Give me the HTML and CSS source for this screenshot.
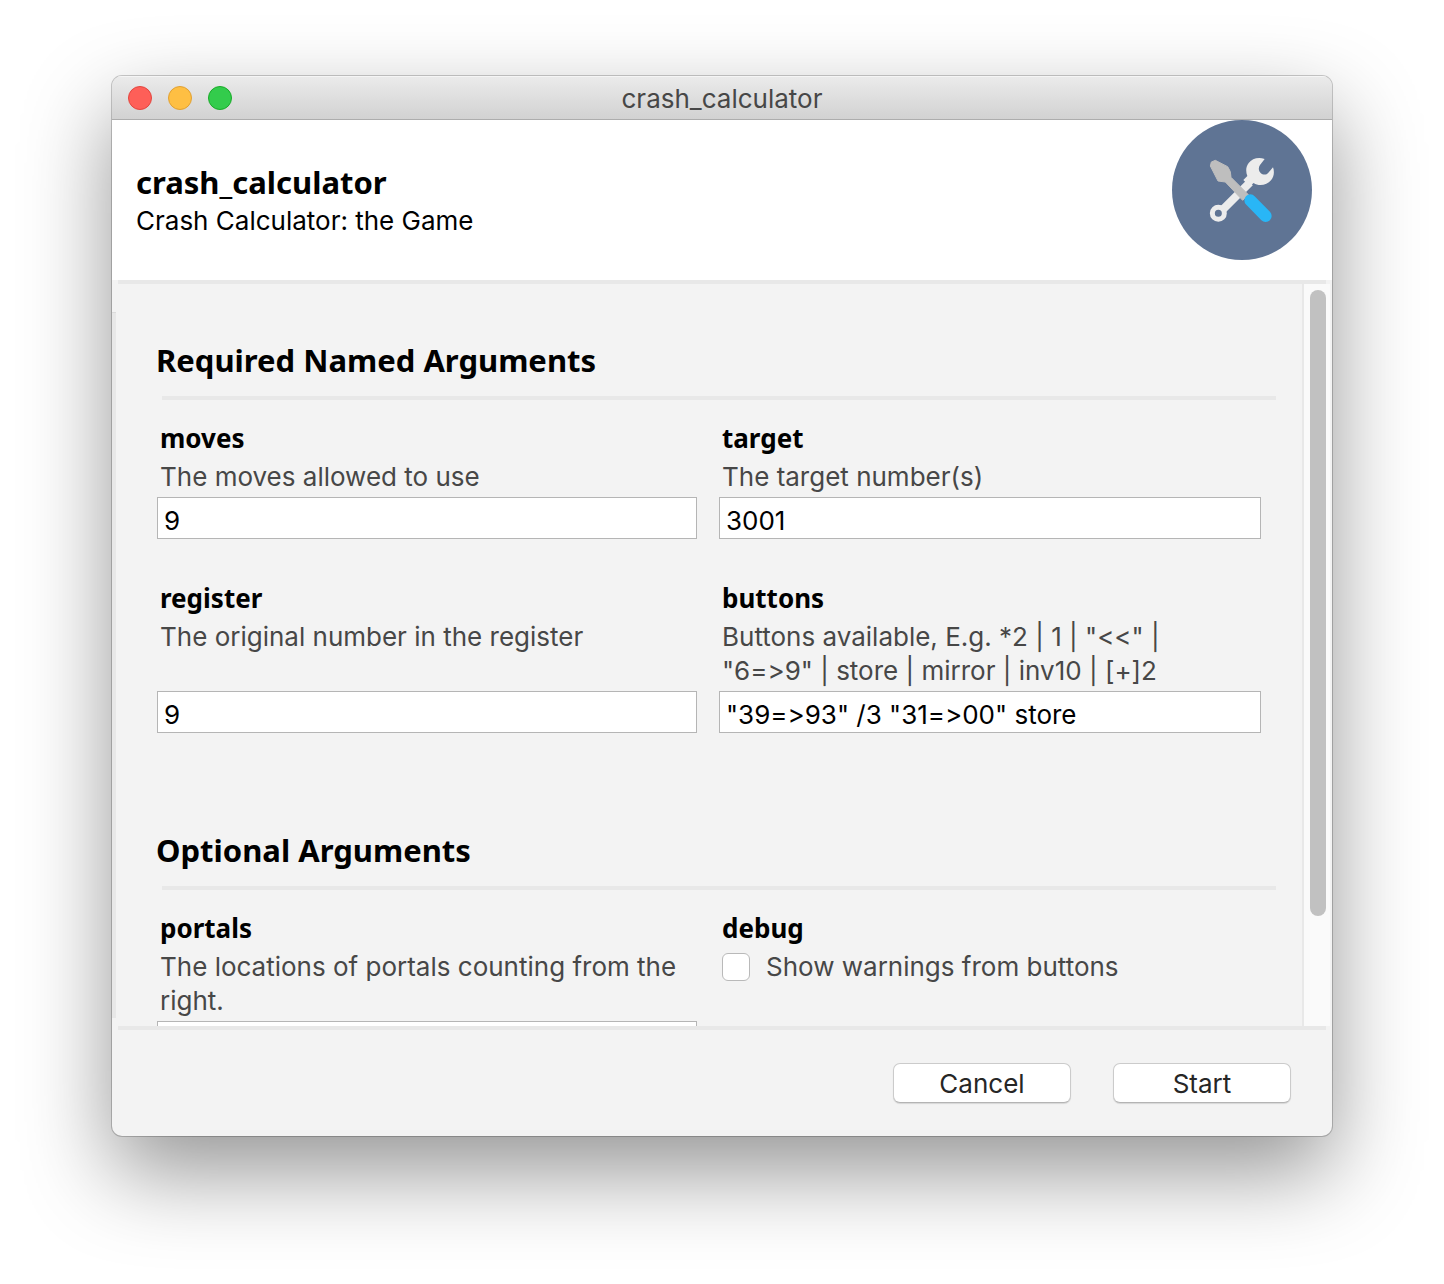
FILE: index.html
```html
<!DOCTYPE html>
<html lang="en">
<head>
<meta charset="utf-8">
<title>crash_calculator</title>
<link rel="stylesheet" href="styles.css">
</head>
<body>
<main class="window">
  <div class="titlebar">
    <div class="lights">
      <button class="light close" type="button" aria-label="Close"></button>
      <button class="light minimize" type="button" aria-label="Minimize"></button>
      <button class="light zoom" type="button" aria-label="Zoom"></button>
    </div>
    <span class="window-title">crash_calculator</span>
  </div>

  <header class="header">
    <div class="header-text">
      <h1 class="program-name">crash_calculator</h1>
      <p class="program-description">Crash Calculator: the Game</p>
    </div>
    <svg class="logo" viewBox="-84 -90 420 420" aria-hidden="true">
      <circle cx="126" cy="120" r="210" fill="#5f7494"/>
      <path d="M66 181 L150 97" stroke="#ececec" stroke-width="24" fill="none"/>
      <circle cx="55" cy="190" r="18" fill="none" stroke="#ececec" stroke-width="15"/>
      <path d="M194 27 C176 20 156 25 146 39 C137 50 137 65 142 78 L130 90 L149 109 L161 99 C176 110 201 106 213 91 C222 80 224 65 219 52 L205 68 C200 75 189 76 182 69 C175 62 175 53 180 45 Z" fill="#ececec"/>
      <path d="M31 48 L34 36 L46 31 L83 50 Q94 64 93 82 L145 134 L128 151 L76 96 L54 93 Z" fill="#bebebe" stroke="#bebebe" stroke-width="3" stroke-linejoin="round"/>
      <path d="M151 151 L197 198" stroke="#29b6f6" stroke-width="36" stroke-linecap="round"/>
    </svg>
  </header>

  <hr class="divider">

  <form class="body" id="arguments">
    <div class="gutter"></div>
    <div class="pane">
      <section class="group">
        <h2 class="group-title">Required Named Arguments</h2>
        <hr class="group-rule">
        <div class="fields">
          <div class="field">
            <label class="name" for="moves">moves</label>
            <p class="help">The moves allowed to use</p>
            <input class="text" id="moves" type="text" value="9">
          </div>
          <div class="field">
            <label class="name" for="target">target</label>
            <p class="help">The target number(s)</p>
            <input class="text" id="target" type="text" value="3001">
          </div>
          <div class="field">
            <label class="name" for="register">register</label>
            <p class="help">The original number in the register</p>
            <input class="text" id="register" type="text" value="9">
          </div>
          <div class="field">
            <label class="name" for="buttons">buttons</label>
            <p class="help">Buttons available, E.g. *2 | 1 | "&lt;&lt;" |<br>"6=&gt;9" | store | mirror | inv10 | [+]2</p>
            <input class="text" id="buttons" type="text" value="&quot;39=&gt;93&quot; /3 &quot;31=&gt;00&quot; store">
          </div>
        </div>
      </section>
      <section class="group">
        <h2 class="group-title">Optional Arguments</h2>
        <hr class="group-rule">
        <div class="fields">
          <div class="field">
            <label class="name" for="portals">portals</label>
            <p class="help">The locations of portals counting from the right.</p>
            <input class="text" id="portals" type="text">
          </div>
          <div class="field">
            <span class="name">debug</span>
            <label class="check help"><input class="box" type="checkbox">Show warnings from buttons</label>
          </div>
        </div>
      </section>
    </div>
    <div class="scrollbar"><div class="thumb"></div></div>
  </form>

  <hr class="divider">

  <footer class="footer">
    <button class="action" type="button">Cancel</button>
    <button class="action" type="submit" form="arguments">Start</button>
  </footer>
</main>
</body>
</html>
```

FILE: styles.css
```css
* {
  box-sizing: border-box;
}

body {
  margin: 0;
  height: 100vh;
  padding: 76px 112px 148px;
  background: #fff;
  color: #000;
  font-family: Inter, "Liberation Sans", sans-serif;
  font-size: 26px;
  line-height: 34px;
  font-variant-ligatures: none;
  font-feature-settings: "calt" 0;
}

h1, h2, p, hr {
  margin: 0;
}

hr {
  border: 0;
  height: 4px;
  flex: none;
  background: #e8e8e8;
}

.window {
  display: flex;
  flex-direction: column;
  height: 100%;
  overflow: hidden;
  border-radius: 10px;
  background: #f3f3f3;
  box-shadow: 0 0 0 1px rgba(0, 0, 0, 0.2), 0 36px 88px rgba(0, 0, 0, 0.42);
}

.titlebar {
  display: grid;
  grid-template-columns: 1fr auto 1fr;
  align-items: center;
  flex: none;
  height: 44px;
  padding: 0 16px;
  border-bottom: 1px solid #adadad;
  background: linear-gradient(#ebebeb, #d2d2d2);
  box-shadow: inset 0 1px 0 #f5f5f5;
}

.lights {
  display: flex;
  gap: 16px;
}

.light {
  width: 24px;
  height: 24px;
  padding: 0;
  border: 1px solid;
  border-radius: 50%;
}

.close {
  border-color: #e2463f;
  background: #fe5f58;
}

.minimize {
  border-color: #e0a033;
  background: #febf43;
}

.zoom {
  border-color: #1aab29;
  background: #33cc4c;
}

.window-title {
  padding-top: 2px;
  color: #474747;
}

.header {
  display: flex;
  justify-content: space-between;
  flex: none;
  height: 160px;
  padding: 0 20px 0 24px;
  background: #fff;
}

.header-text {
  padding-top: 42px;
}

.program-name,
.group-title,
.name {
  font-family: "Noto Sans", "Open Sans", sans-serif;
  font-weight: 700;
}

.program-name {
  margin-bottom: 2px;
  font-size: 31px;
  line-height: 40px;
}

.logo {
  width: 140px;
  height: 140px;
}

.divider {
  margin: 0 6px;
}

.body {
  display: flex;
  flex: 1;
  min-height: 0;
}

.gutter {
  width: 4px;
  margin: 28px 0 8px;
  border-top: 1px solid #dcdcdc;
  background: #e8e8e8;
}

.pane {
  flex: 1;
  overflow: hidden;
  padding: 56px 26px 0 40px;
}

.group {
  margin-bottom: 97px;
}

.group-title {
  font-size: 31px;
  line-height: 40px;
}

.group-rule {
  margin: 16px 0 21px 6px;
}

.fields {
  display: grid;
  grid-template-columns: 540fr 542fr;
  gap: 42px 22px;
  padding: 0 15px 0 1px;
}

.field {
  display: flex;
  flex-direction: column;
}

.name {
  margin-bottom: 5px;
  padding-left: 3px;
  font-size: 26px;
}

.help {
  padding-left: 3px;
  margin-bottom: 3px;
  color: #474747;
}

.text {
  width: 100%;
  height: 42px;
  flex: none;
  margin-top: auto;
  padding: 4px 6px 0;
  border: 1px solid #b5b5b5;
  border-radius: 0;
  background: #fff;
  color: #000;
  font: inherit;
  font-feature-settings: inherit;
}

.check {
  display: flex;
  align-items: center;
  gap: 16px;
}

.box {
  appearance: none;
  width: 28px;
  height: 28px;
  margin: 0;
  border: 1px solid #b9b9b9;
  border-radius: 6px;
  background: #fff;
}

.scrollbar {
  width: 28px;
  margin-right: 2px;
  padding: 6px 4px 6px 6px;
  border-left: 2px solid #e8e8e8;
  background: #fafafa;
}

.thumb {
  width: 16px;
  height: calc(100% * 6 / 7);
  border-radius: 8px;
  background: #c1c1c1;
}

.footer {
  display: flex;
  justify-content: flex-end;
  gap: 42px;
  flex: none;
  padding: 33px 41px;
}

.action {
  width: 178px;
  height: 40px;
  padding: 2px 0 0;
  border: 1px solid #cbcbcb;
  border-bottom-color: #b4b4b4;
  border-radius: 7px;
  background: #fff;
  box-shadow: 0 1px 1px rgba(0, 0, 0, 0.12);
  color: #262626;
  font: inherit;
}
```
